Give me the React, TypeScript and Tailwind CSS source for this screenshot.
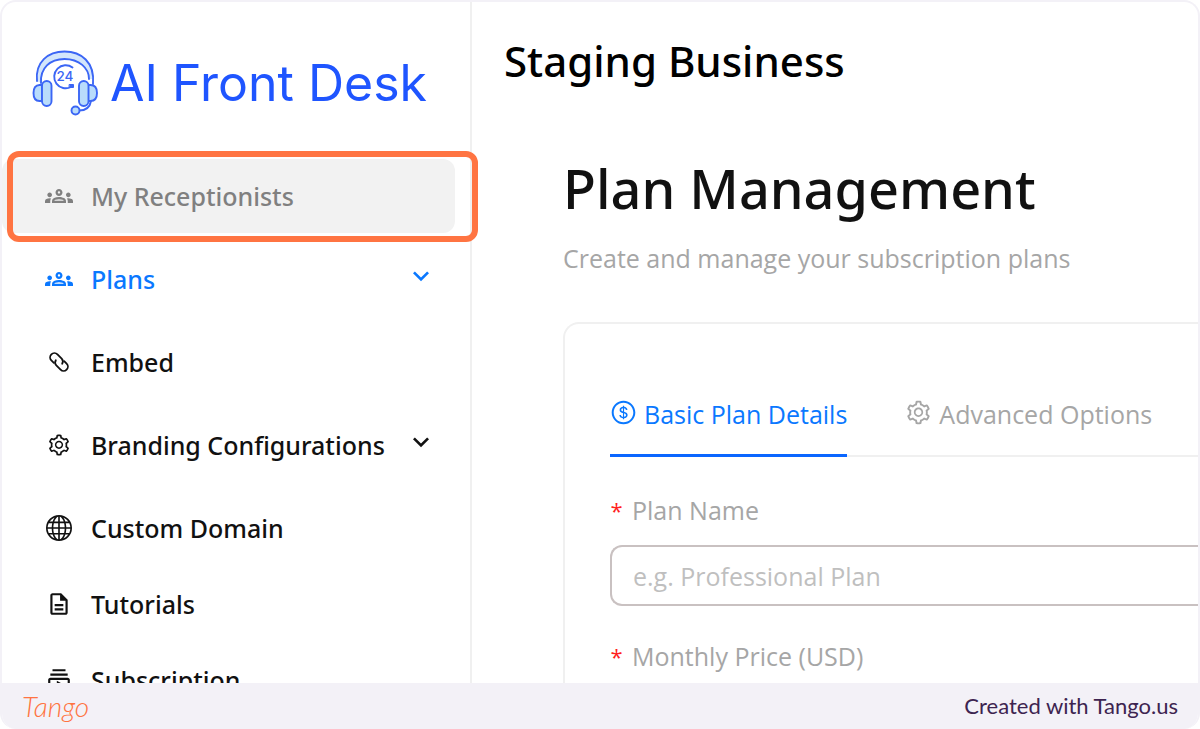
import type { ReactNode } from "react";
import {
  MdKeyboardArrowDown,
  MdOutlineDescription,
  MdOutlineGroups,
  MdOutlineSubscriptions,
} from "react-icons/md";
import { AiOutlineDollarCircle, AiOutlineSetting } from "react-icons/ai";
import { BsGlobe } from "react-icons/bs";

function HeadsetLogo() {
  return (
    <svg viewBox="0 0 66 66" className="size-[66px] shrink-0" fill="none" stroke="#3b66f5" strokeWidth="1.9" strokeLinecap="round" strokeLinejoin="round" aria-hidden="true">
      <path d="M5 31C3 12 16 1.500 32.500 1.500S63 12 61 29l-4 0C56 18 47 9 32.500 9S8 18 9 33z" fill="#d3e6fb" stroke="none" />
      <path d="M5 31C3 12 16 1.500 32.500 1.500S63 12 61 34" />
      <path d="M9 33C8 18 18 9 32.500 9S57 18 57 29" />
      <path d="M10 35H7.500C3.500 35 1.500 38 1.500 43s2 8 6 8H10z" fill="#b9dcfb" />
      <rect x="10" y="31" width="9.500" height="25" rx="4.700" fill="#b9dcfb" />
      <path d="M56 35h2.500c4 0 6.500 3 6.500 8s-2.500 8-6.500 8H56z" fill="#b9dcfb" />
      <rect x="47" y="31" width="9.500" height="25" rx="4.700" fill="#b9dcfb" />
      <path d="M59 51c-1 6-5 9.500-12 9.500" />
      <circle cx="43.500" cy="60.500" r="4" fill="#b9dcfb" />
      <path d="M40.500 17.500A11.500 11.500 0 1 0 39 37" />
      <path d="M37.500 34.500h4v3h-4z" fill="#3b66f5" strokeWidth="1" />
      <text x="24.500" y="31" fontSize="13.500" fontFamily="Inter, sans-serif" fontWeight="500" fill="#3b66f5" stroke="none">24</text>
    </svg>
  );
}

function ChainIcon() {
  return (
    <svg viewBox="0 0 24 24" className="size-6" fill="none" stroke="currentColor" strokeWidth="1.800" strokeLinecap="round" aria-hidden="true">
      <g transform="rotate(45 12 12)">
        <path d="M9 16.300H5.500A4.300 4.300 0 0 1 5.500 7.700h6A4.300 4.300 0 0 1 15.500 11" />
        <path d="M15 7.700H18.500a4.300 4.300 0 0 1 0 8.600h-6A4.300 4.300 0 0 1 8.500 13" />
      </g>
    </svg>
  );
}

type Item = { label: string; icon: ReactNode; tone?: string; expandable?: boolean };

const primary: Item[] = [
  { label: "Plans", icon: <MdOutlineGroups className="size-7" />, tone: "text-[#0a78ff]", expandable: true },
  { label: "Embed", icon: <ChainIcon /> },
  { label: "Branding Configurations", icon: <AiOutlineSetting className="size-6" />, expandable: true },
  { label: "Custom Domain", icon: <BsGlobe className="size-[26px]" /> },
];

const secondary: Item[] = [
  { label: "Tutorials", icon: <MdOutlineDescription className="size-[26px]" /> },
  { label: "Subscription", icon: <MdOutlineSubscriptions className="size-[26px]" /> },
];

function NavRow({ label, icon, tone = "text-[#111111]", expandable }: Item) {
  const inner = (
    <>
      <span className="flex w-7 shrink-0 justify-center">{icon}</span>
      <span className="ml-[18px] grow whitespace-nowrap text-left">{label}</span>
      {expandable && <MdKeyboardArrowDown className="mb-1.5 size-8 shrink-0" />}
    </>
  );
  const cls = `flex h-[74px] w-full items-center pl-[43px] pr-[18px] ${tone}`;
  return (
    <li>
      {expandable ? (
        <button type="button" className={cls}>{inner}</button>
      ) : (
        <a href="#" className={cls}>{inner}</a>
      )}
    </li>
  );
}

function FieldLabel({ htmlFor, children }: { htmlFor: string; children: ReactNode }) {
  return (
    <label htmlFor={htmlFor} className="flex items-center gap-[9px] text-[25px] leading-8 text-[#a6a6a6]">
      <span className="w-[13px] text-center text-[22px] text-[#ff1f1f]">*</span>
      {children}
    </label>
  );
}

export default function App() {
  return (
    <div className="flex h-screen flex-col overflow-hidden rounded-2xl border-2 border-b-0 border-[#f3f1f7] bg-white font-['Open_Sans',sans-serif] text-[#111111]">
      <div className="flex min-h-0 grow overflow-hidden">
        <aside className="w-[470px] shrink-0 border-r-2 border-[#f0f0f0]">
          <div className="flex h-[157px] items-start gap-3 pl-[30px] pt-12">
            <HeadsetLogo />
            <span className="whitespace-nowrap font-['Inter',sans-serif] text-[50px] leading-[66px] text-[#1f55ff]">AI Front Desk</span>
          </div>
          <nav className="mr-[15px] font-['Noto_Sans',sans-serif] text-[25px] font-medium leading-9">
            <ul className="flex flex-col gap-[9px]">
              <li className="relative">
                <a href="#" className="flex h-[74px] items-center rounded-xl bg-[#f2f2f2] pl-[43px] text-[#808080]">
                  <MdOutlineGroups className="size-7 shrink-0" />
                  <span className="ml-[18px] whitespace-nowrap">My Receptionists</span>
                </a>
                <span className="pointer-events-none absolute -bottom-[9px] -right-[23px] -top-2 left-[5px] rounded-xl border-6 border-[#ff7442]" />
              </li>
              {primary.map((item) => (
                <NavRow key={item.label} {...item} />
              ))}
            </ul>
            <ul className="mt-[2px] flex flex-col gap-[2px]">
              {secondary.map((item) => (
                <NavRow key={item.label} {...item} />
              ))}
            </ul>
          </nav>
        </aside>
        <main className="min-w-0 grow overflow-hidden">
          <header className="pl-8 pt-[35px] font-['Noto_Sans',sans-serif] text-[42px] font-medium leading-[48px] text-black">Staging Business</header>
          <section className="pl-[91px] pt-[65px]">
            <h1 className="whitespace-nowrap font-['Noto_Sans',sans-serif] text-[54px] font-medium leading-[76px]">Plan Management</h1>
            <p className="mt-[14px] whitespace-nowrap text-[25px] leading-9 text-[#a6a6a6]">Create and manage your subscription plans</p>
            <div className="mt-[46px] h-[600px] rounded-tl-2xl border-l-2 border-t-2 border-[#f0f0f0] pl-[45px] pt-[50px]">
              <div role="tablist" className="flex h-[83px] gap-[58px] border-b-2 border-[#f0f0f0] text-[25px] leading-[38px]">
                <button type="button" role="tab" aria-selected="true" className="-mb-[2px] flex items-start gap-[7px] whitespace-nowrap border-b-3 border-[#0a66ff] pt-[21px] text-[#0a78ff]">
                  <AiOutlineDollarCircle className="mt-1 size-[27px]" />
                  Basic Plan Details
                </button>
                <button type="button" role="tab" aria-selected="false" className="flex items-start gap-[7px] whitespace-nowrap pt-[21px] text-[#a6a6a6]">
                  <AiOutlineSetting className="mt-1 size-[27px]" />
                  Advanced Options
                </button>
              </div>
              <div className="pt-[37px]">
                <FieldLabel htmlFor="plan-name">Plan Name</FieldLabel>
                <input id="plan-name" type="text" placeholder="e.g. Professional Plan" className="mt-[19px] block h-[61px] w-full rounded-l-xl border-2 border-r-0 border-[#c9c1c1] px-[21px] text-[25px] placeholder:text-[#bfbfbf]" />
              </div>
              <div className="pt-[34px]">
                <FieldLabel htmlFor="monthly-price">Monthly Price (USD)</FieldLabel>
                <input id="monthly-price" type="text" className="mt-[19px] block h-[61px] w-full rounded-l-xl border-2 border-r-0 border-[#c9c1c1] px-[21px] text-[25px]" />
              </div>
            </div>
          </section>
        </main>
      </div>
      <footer className="flex h-[46px] shrink-0 items-center justify-between bg-[#f3f1f7] px-5">
        <a href="#" className="font-['Lato',cursive] text-[28px] font-light italic leading-8 text-[#ff7442]">Tango</a>
        <span className="font-['Lato',sans-serif] text-[22px] leading-8 text-[#3d2450]">Created with Tango.us</span>
      </footer>
    </div>
  );
}
